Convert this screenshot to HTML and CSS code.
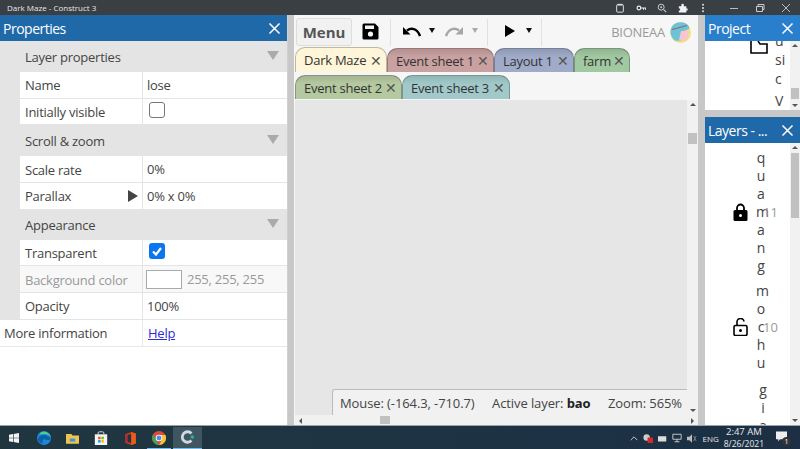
FILE: index.html
```html
<!DOCTYPE html>
<html lang="en">
<head>
<meta charset="UTF-8" />
<title>Dark Maze - Construct 3</title>
<link rel="stylesheet" href="styles.css">
</head>
<body>

<div class="titlebar">
  <span class="title">Dark Maze - Construct 3</span>
  <div class="title-icons">
    <svg width="10" height="10" viewBox="0 0 12 12"><rect x="2" y="2" width="8" height="9" rx="1" fill="none" stroke="#ddd" stroke-width="1.2"/><rect x="3" y="1" width="6" height="2" fill="#ddd"/></svg>
    <svg width="10" height="10" viewBox="0 0 12 12"><circle cx="3.5" cy="6" r="2.2" fill="none" stroke="#eee" stroke-width="1.4"/><path d="M5.5 6H11.5V8M9 6V8" fill="none" stroke="#eee" stroke-width="1.3"/></svg>
    <svg width="10" height="10" viewBox="0 0 12 12"><circle cx="5" cy="5" r="3.6" fill="none" stroke="#ccc" stroke-width="1.2"/><path d="M8 8L11 11" stroke="#ccc" stroke-width="1.4"/><circle cx="5" cy="5" r="1.2" fill="#ccc"/></svg>
    <svg width="10" height="10" viewBox="0 0 12 12"><path d="M1 4H4V2.5A1.5 1.5 0 0 1 7 2.5V4H10V6.5H11.5V9H10V11.5H1V9H2.5V6.500H1Z" fill="#f2f2f2"/></svg>
    <svg class="dots" width="4" height="10" viewBox="0 0 4 12"><circle cx="2" cy="2" r="1.200" fill="#ddd"/><circle cx="2" cy="6" r="1.200" fill="#ddd"/><circle cx="2" cy="10" r="1.200" fill="#ddd"/></svg>
  </div>
  <div class="window-btns">
    <svg width="10" height="10" viewBox="0 0 10 10"><path d="M1 5.500H9" stroke="#bbb"/></svg>
    <svg width="10" height="10" viewBox="0 0 10 10"><path d="M1.500 3.500H7.500V8.500H1.500ZM3 3.500V1.500H9V6.500H7.500" fill="none" stroke="#ccc"/></svg>
    <svg width="10" height="10" viewBox="0 0 10 10"><path d="M1 1L9 9M9 1L1 9" stroke="#bbb"/></svg>
  </div>
</div>

<div class="app">
  <section class="left-panel">
    <div class="panel-head dark">
      <span>Properties</span>
      <svg class="close" width="13" height="13" viewBox="0 0 13 13"><path d="M1.500 1.500L11.500 11.500M11.500 1.500L1.500 11.500" stroke="#fff" stroke-width="1.500"/></svg>
    </div>
    <div class="props">
      <div class="group">Layer properties<i class="tri"></i></div>
      <div class="row"><div class="name">Name</div><div class="val">lose</div></div>
      <div class="row"><div class="name">Initially visible</div><div class="val"><span class="check"></span></div></div>
      <div class="group">Scroll &amp; zoom<i class="tri"></i></div>
      <div class="row"><div class="name">Scale rate</div><div class="val">0%</div></div>
      <div class="row"><div class="name">Parallax<i class="expand"></i></div><div class="val">0% x 0%</div></div>
      <div class="group short">Appearance<i class="tri"></i></div>
      <div class="row"><div class="name">Transparent</div><div class="val"><span class="check on"><svg width="16" height="16" viewBox="0 0 16 16"><path d="M4 8.500L7 11.500L12 5" fill="none" stroke="#fff" stroke-width="2.200"/></svg></span></div></div>
      <div class="row off"><div class="name">Background color</div><div class="val"><span class="swatch"></span>255, 255, 255</div></div>
      <div class="row"><div class="name">Opacity</div><div class="val">100%</div></div>
      <div class="row info"><div class="name">More information</div><div class="val"><a href="#">Help</a></div></div>
    </div>
  </section>

  <section class="center">
    <div class="toolbar">
      <button class="menu-btn">Menu</button>
      <svg class="save" width="17" height="17" viewBox="0 0 17 17"><path d="M2 0.500H13L16.500 4V15A1.500 1.500 0 0 1 15 16.500H2A1.500 1.500 0 0 1 0.500 15V2A1.500 1.500 0 0 1 2 0.500Z" fill="#000"/><rect x="3" y="2.500" width="9" height="3.500" fill="#f5f5f5"/><circle cx="8.500" cy="11" r="2.600" fill="#f5f5f5"/></svg>
      <i class="sep"></i>
      <svg class="undo" width="18" height="11" viewBox="0 0 18 11"><path d="M4 4.500C8 1.500 14 2 17 10" fill="none" stroke="#000" stroke-width="2.400"/><path d="M0 1V8.500H7.500Z" fill="#000"/></svg>
      <i class="drop"></i>
      <svg class="redo" width="18" height="11" viewBox="0 0 18 11"><path d="M14 4.500C10 1.500 4 2 1 10" fill="none" stroke="#a6a6a6" stroke-width="2.400"/><path d="M18 1V8.500H10.500Z" fill="#a6a6a6"/></svg>
      <i class="drop dim"></i>
      <i class="sep"></i>
      <i class="play"></i>
      <i class="drop"></i>
      <i class="sep"></i>
      <span class="user">BIONEAA</span>
      <svg class="avatar" width="21" height="21" viewBox="0 0 21 21"><circle cx="10.500" cy="10.500" r="10.500" fill="#f3dc8c"/><path d="M2 4.500A10.500 10.500 0 0 1 19 4.500L19 7L11 10V19L5 18.500A10.500 10.500 0 0 1 2 4.500Z" fill="#6cc3d8"/><path d="M11 9H18V15L14 18.500H9Z" fill="#f8c6cf"/><path d="M2 7.500L17 3.500" stroke="#8a6b6b" stroke-width="1.200"/></svg>
    </div>

    <div class="tabs">
      <div class="tab w-dark">Dark Maze<b>&#10005;</b></div>
      <div class="tab w-es1">Event sheet 1<b>&#10005;</b></div>
      <div class="tab w-lay">Layout 1<b>&#10005;</b></div>
      <div class="tab w-farm">farm<b>&#10005;</b></div>
    </div>
    <div class="tabs second">
      <div class="tab w-es2">Event sheet 2<b>&#10005;</b></div>
      <div class="tab w-es3">Event sheet 3<b>&#10005;</b></div>
    </div>

    <div class="viewport">
      <div class="canvas">
        <div class="status">
          <span>Mouse: (-164.3, -710.7)</span>
          <span>Active layer: <strong>bao</strong></span>
          <span>Zoom: 565%</span>
        </div>
      </div>
      <div class="vscroll"><i class="up"></i><i class="thumb"></i><i class="down"></i></div>
      <div class="hscroll"><i class="lf"></i><i class="thumb"></i><i class="rt"></i></div>
    </div>
  </section>

  <section class="right-panel">
    <div class="project">
      <div class="panel-head light">
        <span>Project</span>
        <svg class="close" width="13" height="13" viewBox="0 0 13 13"><path d="M1.500 1.500L11.500 11.500M11.500 1.500L1.500 11.500" stroke="#fff" stroke-width="1.500"/></svg>
      </div>
      <div class="project-body">
        <svg class="folder" width="18" height="13" viewBox="0 0 18 13"><path d="M1 0V12H17V3H10L8 0" fill="#fff" stroke="#000" stroke-width="1.600"/></svg>
        <div class="letters">u<br>si<br>c<br><span class="v">V</span></div>
        <div class="vscroll small"><i class="up"></i><i class="thumb"></i><i class="down"></i></div>
      </div>
    </div>
    <div class="layers">
      <div class="panel-head dark">
        <span>Layers - ...</span>
        <svg class="close" width="13" height="13" viewBox="0 0 13 13"><path d="M1.500 1.500L11.500 11.500M11.500 1.500L1.500 11.500" stroke="#fff" stroke-width="1.500"/></svg>
      </div>
      <div class="layers-body">
        <div class="layer">
          <svg width="15" height="18" viewBox="0 0 15 18"><path d="M4 8V5A3.500 3.500 0 0 1 11 5V8" fill="none" stroke="#000" stroke-width="1.800"/><rect x="0.500" y="7" width="14" height="11" rx="1.500"/><circle cx="7.500" cy="12.500" r="1.500" fill="#fff"/></svg>
          <div class="lname">quamang</div><span class="num">11</span>
        </div>
        <div class="layer">
          <svg width="15" height="18" viewBox="0 0 15 18"><path d="M4 8V4.500A3.500 3.500 0 0 1 11 3.500" fill="none" stroke="#000" stroke-width="1.600"/><rect x="1" y="7.500" width="13" height="10" rx="1.500" fill="#fff" stroke="#000" stroke-width="1.600"/><circle cx="7.500" cy="12.500" r="1.500"/></svg>
          <div class="lname">mochu</div><span class="num">10</span>
        </div>
        <div class="layer last">
          <div class="lname">gia</div>
        </div>
        <div class="vscroll small layer-scroll"><i class="up"></i><i class="thumb"></i><i class="down"></i></div>
      </div>
    </div>
  </section>
</div>

<div class="taskbar">
  <svg class="tb win" width="10" height="10" viewBox="0 0 15 15"><path d="M0 2.500L6 1.600V7H0ZM7 1.400L15 0V7H7ZM0 8H6V13.400L0 12.500ZM7 8H15V15L7 13.600Z" fill="#f4f4f4"/></svg>
  <svg class="tb edge" width="14" height="14" viewBox="0 0 16 16"><circle cx="8" cy="8" r="8" fill="#1e88d8"/><path d="M1 9C3 3 12 3 15.500 8.500C15 11 12 10.500 10 10C8 9 5 9.500 7 14C4 14 1.500 12 1 9Z" fill="#0f5fa8"/><path d="M3 3C7 -1 14 1 16 7C14 4 9 2.500 5 4Z" fill="#4fd08a"/></svg>
  <svg class="tb explorer" width="13" height="11" viewBox="0 0 17 14"><path d="M0 1H7L8.500 3H17V14H0Z" fill="#f2c24f"/><rect x="5" y="7" width="7" height="4" fill="#3a9ad9"/></svg>
  <svg class="tb store" width="14" height="14" viewBox="0 0 17 17"><path d="M5 4V2.500A1.500 1.500 0 0 1 6.500 1H10.500A1.500 1.500 0 0 1 12 2.500V4" fill="none" stroke="#d9d9d9" stroke-width="1.200"/><rect x="1" y="4" width="15" height="13" fill="#f4f4f4"/><rect x="5" y="7" width="3" height="3" fill="#f25022"/><rect x="9" y="7" width="3" height="3" fill="#7fba00"/><rect x="5" y="11" width="3" height="3" fill="#00a4ef"/><rect x="9" y="11" width="3" height="3" fill="#ffb900"/></svg>
  <svg class="tb office" width="11" height="13" viewBox="0 0 14 17"><path d="M8 0L14 2V15L8 17L0 14V3Z" fill="#d83b01"/><path d="M8 2.500V14.500L3 13V4Z" fill="#1f3540"/><path d="M8 0L14 2V15L8 17Z" fill="#eb5a1f"/><path d="M0 3L3 4V13L0 14Z" fill="#a52a4a"/></svg>
  <svg class="tb chrome" width="14" height="14" viewBox="0 0 17 17"><circle cx="8.500" cy="8.500" r="8.500" fill="#e04a3c"/><path d="M1.500 4L5 11L8.500 17A8.500 8.500 0 0 1 1.500 4Z" fill="#3da854"/><path d="M8.500 5H16.300A8.500 8.500 0 0 1 8.500 17L12 11Z" fill="#f6c531"/><circle cx="8.500" cy="8.500" r="4" fill="#fff"/><circle cx="8.500" cy="8.500" r="3" fill="#4a8df0"/></svg>
  <i class="running"></i>
  <div class="active-app">
    <svg width="15" height="14" viewBox="0 0 15 16"><path d="M12 4A6 6 0 1 0 12 12" fill="none" stroke="#cfd9e0" stroke-width="3.200"/><circle cx="13" cy="8" r="2" fill="#2bb39a"/></svg>
  </div>
  <div class="tray">
    <svg width="8" height="5" viewBox="0 0 9 6"><path d="M0.500 5L4.500 1L8.500 5" fill="none" stroke="#ddd"/></svg>
    <svg width="10" height="10" viewBox="0 0 11 11"><circle cx="4" cy="5" r="3.500" fill="#ccc"/><rect x="5" y="5" width="6" height="6" fill="#d9262c"/></svg>
    <svg width="9" height="7" viewBox="0 0 12 8"><rect y="1" width="11" height="7" fill="#ddd"/></svg>
    <svg width="10" height="10" viewBox="0 0 12 11"><path d="M1 1H11V7H1ZM6 7V10M3 10H9" fill="none" stroke="#ddd"/></svg>
    <svg width="10" height="9" viewBox="0 0 12 10"><path d="M0 3H3L6 0V10L3 7H0Z" fill="#bbb"/><path d="M8 2L11 8M11 2L8 8" stroke="#aaa" stroke-width="0.700"/></svg>
    <span class="lang">ENG</span>
    <div class="clock"><span class="time">2:47 AM</span><span>8/26/2021</span></div>
    <div class="notif">
      <svg width="11" height="11" viewBox="0 0 14 13"><path d="M0 0H14V10H5L3 13V10H0Z" fill="#eee"/></svg>
      <span class="badge">1</span>
    </div>
  </div>
</div>

</body>
</html>
```

FILE: styles.css
```css
* {
  box-sizing: border-box;
}
html, body {
  margin: 0;
  height: 100%;
  overflow: hidden;
}
body {
  width: 800px;
  height: 449px;
  display: flex;
  flex-direction: column;
  font-family: 'Open Sans', sans-serif;
  font-size: 13px;
  letter-spacing: -0.25px;
  color: #444;
  background-color: #c8c8c8;
}
i {
  display: block;
  font-style: normal;
}
.titlebar {
  height: 15px;
  flex: none;
  display: flex;
  align-items: center;
  background-color: #3a3f43;
  color: #e8e8e8;
  padding-left: 7px;
  font-size: 8px;
  letter-spacing: 0;
}
.title {
  flex: 1;
}
.title-icons {
  display: flex;
  align-items: center;
  gap: 11px;
  margin-right: 24px;
}
.dots {
  margin-left: 2px;
}
.window-btns {
  display: flex;
  gap: 16px;
  margin-right: 9px;
}
.app {
  height: 410px;
  flex: none;
  display: flex;
}
.left-panel {
  width: 288px;
  flex: none;
  background-color: #fff;
  border-right: 1px solid #d0d0d0;
}
.panel-head {
  height: 26px;
  display: flex;
  align-items: center;
  justify-content: space-between;
  padding: 0 6px 0 3px;
  color: #fff;
  font-size: 14px;
  letter-spacing: -0.5px;
}
.panel-head.dark {
  background-color: #1f69a8;
}
.panel-head.light {
  background-color: #2a7fcc;
}
.props {
  background-color: #fff;
}
.group {
  height: 31px;
  padding-left: 25px;
  display: flex;
  justify-content: space-between;
  align-items: center;
  background-color: #e4e4e4;
  color: #444;
}
.group.short {
  height: 30px;
}
.tri {
  width: 0;
  height: 0;
  margin: -3px 8px 0 0;
  border-left: 6px solid transparent;
  border-right: 6px solid transparent;
  border-top: 9px solid #aaa;
}
.row {
  height: 26.700px;
  display: grid;
  grid-template-columns: 143px 1fr;
  background-color: #e4e4e4;
}
.name {
  display: flex;
  align-items: center;
  justify-content: space-between;
  margin: 0 1px 1px 20px;
  padding: 1px 4px 0 5px;
  background-color: #fff;
  white-space: nowrap;
}
.val {
  display: flex;
  align-items: center;
  margin-bottom: 1px;
  padding-left: 4px;
  background-color: #fff;
}
.check {
  width: 16px;
  height: 16px;
  margin: -3px 0 0 2px;
  border: 1px solid #777;
  border-radius: 3px;
  background-color: #fff;
}
.check.on {
  border: none;
  background-color: #0b76f0;
  display: block;
}
.check.on svg {
  display: block;
}
.expand {
  width: 0;
  height: 0;
  border-top: 6px solid transparent;
  border-bottom: 6px solid transparent;
  border-left: 10px solid #444;
}
.off .name, .off .val {
  color: #999;
  background-color: #f8f8f8;
}
.swatch {
  width: 36px;
  height: 19px;
  margin: 0 5px 0 -1px;
  border: 1px solid #aaa;
  background-color: #fff;
}
.info {
  background-color: #e8e8e8;
}
.info .name {
  margin-left: 0;
  padding-left: 4px;
}
.val a {
  color: #2a2ae0;
  margin-left: 1px;
}
.center {
  width: 404px;
  margin-left: 6px;
  flex: none;
  display: flex;
  flex-direction: column;
  background-color: #f6f6f6;
}
.toolbar {
  height: 32px;
  flex: none;
  display: flex;
  align-items: center;
  padding: 2px 0 0 2px;
}
.menu-btn {
  width: 56px;
  height: 28px;
  border: 1px solid #ddd;
  border-radius: 3px;
  background-color: #f1f1f1;
  font-family: 'Open Sans', sans-serif;
  font-size: 15px;
  font-weight: 700;
  color: #555;
  padding: 0;
}
.save {
  margin: -2px 11px 0 10px;
}
.sep {
  width: 1px;
  height: 27px;
  background-color: #e0e0e0;
}
.undo {
  margin: -2px 0 0 12px;
}
.drop {
  width: 0;
  height: 0;
  margin: -3px 0 0 8px;
  border-left: 3px solid transparent;
  border-right: 3px solid transparent;
  border-top: 5px solid #111;
}
.drop.dim {
  border-top-color: #aaa;
  margin-left: 9px;
  margin-right: 9px;
}
.redo {
  margin: -2px 0 0 10px;
}
.play {
  width: 0;
  height: 0;
  margin: -3px 0 0 17px;
  border-top: 6px solid transparent;
  border-bottom: 6px solid transparent;
  border-left: 10px solid #000;
}
.play + .drop {
  margin-left: 11px;
  margin-right: 9px;
}
.user {
  margin-left: auto;
  font-size: 13px;
  color: #9a9a9a;
}
.avatar {
  margin: 0 7px 0 5px;
}
.tabs {
  height: 25px;
  flex: none;
  display: flex;
  padding-left: 1px;
  align-items: flex-end;
}
.tabs.second {
  margin-top: 2px;
}
.tab {
  height: 24px;
  flex: none;
  display: flex;
  align-items: center;
  justify-content: space-between;
  padding: 0 4px 0 8px;
  border: 1px solid rgba(0,0,0,0.25);
  border-bottom: none;
  border-radius: 10px 10px 0 0;
  background-image: linear-gradient(rgba(0,0,0,0.1), rgba(0,0,0,0) 35%);
  white-space: nowrap;
  color: #333;
}
.tab b {
  font-weight: 400;
  font-size: 14px;
  letter-spacing: 0;
  color: #555;
}
.w-dark {
  width: 92px;
  height: 25px;
  background-color: #fff5d8;
  background-image: none;
}
.w-es1 {
  width: 107px;
  background-color: #c9a1a1;
}
.w-lay {
  width: 80px;
  background-color: #9fabc9;
}
.w-farm {
  width: 56px;
  background-color: #a1c9a1;
}
.w-es2 {
  width: 107px;
  background-color: #b5c9a1;
}
.w-es3 {
  width: 108px;
  background-color: #a1c9c9;
}
.viewport {
  flex: 1;
  margin: 1px 0 0 1px;
  display: grid;
  grid-template-columns: 1fr 11px;
  grid-template-rows: 1fr 10px;
  min-height: 0;
}
.canvas {
  position: relative;
  background-color: #e6e6e6;
}
.status {
  position: absolute;
  left: 37px;
  right: 0;
  bottom: 0;
  height: 26px;
  display: flex;
  align-items: center;
  justify-content: space-between;
  padding: 1px 5px 0 7px;
  border: 1px solid #bbb;
  border-right: none;
  border-bottom: none;
  border-radius: 3px 0 0 0;
  background-color: #f1f1f1;
  letter-spacing: -0.1px;
  color: #444;
}
.status strong {
  color: #222;
}
.vscroll {
  position: relative;
  background-color: #f1f1f1;
}
.vscroll .thumb {
  position: absolute;
  left: 1px;
  right: 1px;
  top: 33px;
  height: 11px;
  background-color: #c1c1c1;
}
.up, .down {
  position: absolute;
  left: 50%;
  margin-left: -3px;
  width: 0;
  height: 0;
  border-left: 3px solid transparent;
  border-right: 3px solid transparent;
}
.up {
  top: 3px;
  border-bottom: 3px solid #555;
}
.down {
  bottom: 3px;
  border-top: 3px solid #555;
}
.hscroll {
  grid-column: 1 / 3;
  position: relative;
  background-color: #f1f1f1;
}
.hscroll .thumb {
  position: absolute;
  left: 85px;
  top: 1px;
  width: 10px;
  height: 8px;
  background-color: #c1c1c1;
}
.lf, .rt {
  position: absolute;
  top: 3px;
  width: 0;
  height: 0;
  border-top: 3px solid transparent;
  border-bottom: 3px solid transparent;
}
.lf {
  left: 4px;
  border-right: 3px solid #555;
}
.rt {
  right: 4px;
  border-left: 3px solid #555;
}
.right-panel {
  width: 95px;
  margin-left: 7px;
  flex: none;
  display: flex;
  flex-direction: column;
  gap: 7px;
}
.project {
  height: 95px;
  flex: none;
  display: flex;
  flex-direction: column;
}
.project-body {
  flex: 1;
  display: flex;
  background-color: #fff;
  overflow: hidden;
  position: relative;
}
.folder {
  flex: none;
  margin: 0 0 0 45px;
}
.letters {
  width: 15px;
  margin: -10px 0 0 7px;
  font-size: 14px;
  line-height: 19px;
  letter-spacing: 0;
}
.letters .v {
  display: block;
  margin-top: 3px;
}
.vscroll.small {
  position: absolute;
  right: 0;
  top: 0;
  bottom: 0;
  width: 10px;
}
.vscroll.small .thumb {
  top: 47px;
}
.layers {
  flex: 1;
  min-height: 0;
  display: flex;
  flex-direction: column;
}
.layers-body {
  flex: 1;
  position: relative;
  overflow: hidden;
  background-color: #fff;
  padding-top: 6px;
}
.layer {
  display: flex;
  align-items: center;
  padding-left: 28px;
  margin-bottom: 7px;
}
.layer svg {
  flex: none;
  margin-right: 8px;
}
.lname {
  width: 10px;
  flex: none;
  word-break: break-all;
  font-size: 14px;
  line-height: 18px;
  letter-spacing: 0;
  text-align: center;
}
.num {
  margin-left: -3px;
  letter-spacing: 0;
  color: #999;
}
.layer.last {
  padding-left: 53px;
  margin-top: 9px;
}
.layer-scroll .thumb {
  top: 10px !important;
  height: 65px !important;
}
.taskbar {
  flex: 1;
  display: flex;
  align-items: center;
  background: linear-gradient(90deg, #20363f, #1d3344 60%, #1c2f44);
  border-top: 1px solid #9aa4a8;
  position: relative;
}
.tb {
  flex: none;
}
.win {
  margin-left: 9px;
}
.edge {
  margin-left: 18px;
}
.explorer {
  margin-left: 15px;
}
.store {
  margin-left: 15px;
}
.office {
  margin-left: 17px;
}
.chrome {
  margin-left: 16px;
}
.running {
  position: absolute;
  left: 147px;
  bottom: 0;
  width: 24px;
  height: 2px;
  background-color: #76b9ed;
}
.active-app {
  width: 29px;
  height: 23px;
  margin-left: 7px;
  display: flex;
  align-items: center;
  justify-content: center;
  background-color: #3f5660;
  border-bottom: 2px solid #76b9ed;
}
.tray {
  margin-left: auto;
  display: flex;
  align-items: center;
  gap: 5px;
  color: #e8e8e8;
  font-size: 8px;
  letter-spacing: 0;
  padding-right: 10px;
}
.clock {
  display: flex;
  flex-direction: column;
  align-items: center;
  line-height: 12px;
  margin-right: 7px;
  font-size: 8.500px;
}
.time {
  font-size: 9.500px;
}
.notif {
  position: relative;
  width: 14px;
  height: 14px;
}
.badge {
  position: absolute;
  right: -1px;
  bottom: -1px;
  width: 9px;
  height: 9px;
  border-radius: 50%;
  background-color: #333;
  text-align: center;
  line-height: 9px;
  font-size: 7px;
  color: #fff;
}
```
